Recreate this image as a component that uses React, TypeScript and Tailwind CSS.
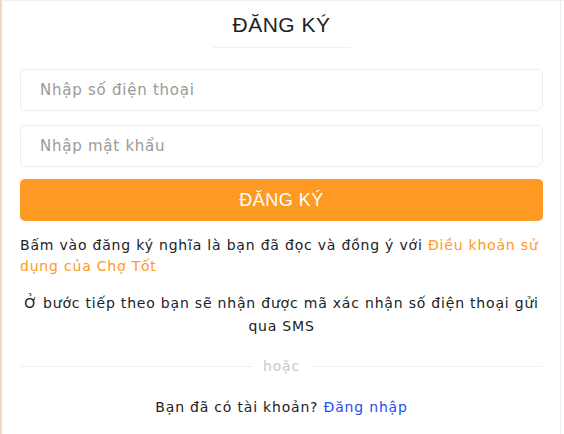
export default function App() {
  const body = { fontFamily: '"DejaVu Sans", Verdana, sans-serif' };
  const head = { fontFamily: '"Liberation Sans", Arial, sans-serif' };

  return (
    <div className="w-[564px] h-[434px] bg-white overflow-hidden">
      <div className="h-full border-l-2 border-l-[#f6d3c3] border-t border-t-[#f0f0f0] pr-[3px]">
        <div className="h-full ml-px border-r border-[#eeeeee] bg-white px-[17px]">
          <div className="flex flex-col items-center pt-[10px]">
            <h1 className="text-[21px] leading-[28px] text-[#222] tracking-[0.5px]" style={head}>
              ĐĂNG KÝ
            </h1>
            <div className="w-[138px] h-px bg-[#f0f0f0] mt-[8px]" />
          </div>

          <div className="mt-[21px] flex flex-col gap-[14px]">
            <input
              className="h-[42px] w-full rounded-[6px] border border-[#ececec] px-[19px] text-[15px] tracking-[0.75px] text-[#333] placeholder:text-[#9a9a9a] outline-none"
              style={body}
              placeholder="Nhập số điện thoại"
            />
            <input
              type="password"
              className="h-[42px] w-full rounded-[6px] border border-[#ececec] px-[19px] text-[15px] tracking-[0.75px] text-[#333] placeholder:text-[#9a9a9a] outline-none"
              style={body}
              placeholder="Nhập mật khẩu"
            />
          </div>

          <button
            className="mt-[12px] h-[42px] w-full rounded-[5px] bg-[#fe9a23] text-white text-[18px] tracking-[0.5px]"
            style={head}
          >
            ĐĂNG KÝ
          </button>

          <p className="mt-[14px] text-[14px] tracking-[0.8px] leading-[21px] text-[#222]" style={body}>
            Bấm vào đăng ký nghĩa là bạn đã đọc và đồng ý với{' '}
            <a className="text-[#fe9a23]">Điều khoản sử dụng của Chợ Tốt</a>
          </p>

          <p className="mt-[15px] text-center text-[14px] tracking-[0.8px] leading-[23px] text-[#222]" style={body}>
            Ở bước tiếp theo bạn sẽ nhận được mã xác nhận số điện thoại gửi qua SMS
          </p>

          <div className="mt-[18px] flex items-center gap-[10px]">
            <div className="flex-1 h-px bg-[#f0f0f0]" />
            <span className="text-[14px] tracking-[0.8px] text-[#c8c8c8]" style={body}>hoặc</span>
            <div className="flex-1 h-px bg-[#f0f0f0]" />
          </div>

          <p className="mt-[20px] text-center text-[14px] tracking-[0.8px] text-[#222]" style={body}>
            Bạn đã có tài khoản? <a className="text-[#2a4cf0]">Đăng nhập</a>
          </p>
        </div>
      </div>
    </div>
  );
}
